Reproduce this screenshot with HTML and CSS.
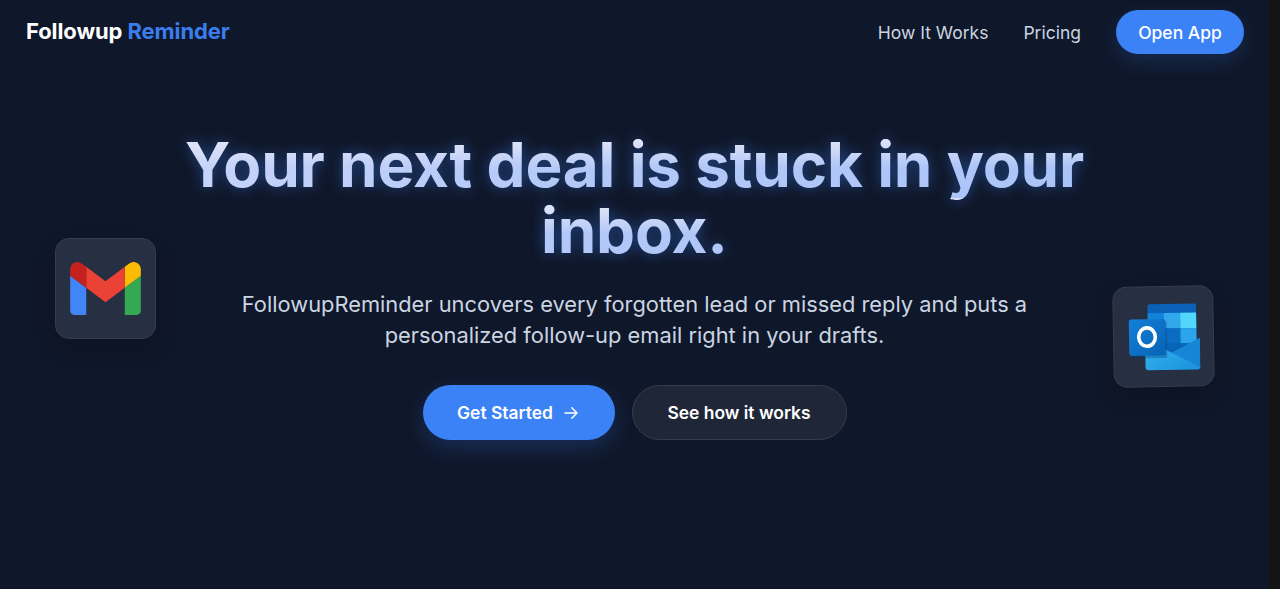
FILE: index.html
```html
<!DOCTYPE html>
<html lang="en">
<head>
    <meta charset="UTF-8">
    <meta name="viewport" content="width=device-width, initial-scale=1.0">
    <title>Followup Reminder</title>
    <link rel="stylesheet" href="styles.css">
</head>
<body>
    <div class="page">
        <header class="navbar">
            <a href="#" class="logo">Followup <span class="logo-accent">Reminder</span></a>
            <nav class="nav-links">
                <a href="#how">How It Works</a>
                <a href="#pricing">Pricing</a>
                <a href="#app" class="btn-app">Open App</a>
            </nav>
        </header>

        <main class="hero">
            <div class="tile tile-gmail">
                <svg width="71" height="53" viewBox="52 42 88 66" aria-label="Gmail">
                    <path fill="#4285f4" d="M58 108h14V74L52 59v43c0 3.32 2.69 6 6 6"/>
                    <path fill="#34a853" d="M120 108h14c3.32 0 6-2.69 6-6V59l-20 15"/>
                    <path fill="#fbbc04" d="M120 48v26l20-15v-8c0-7.42-8.47-11.65-14.4-7.2"/>
                    <path fill="#ea4335" d="M72 74V48l24 18 24-18v26L96 92"/>
                    <path fill="#c5221f" d="M52 51v8l20 15V48l-5.6-4.2c-5.94-4.45-14.4-.22-14.4 7.2"/>
                </svg>
            </div>

            <div class="hero-content">
                <h1>Your next deal is stuck in your<br>inbox.</h1>
                <p class="subtitle">FollowupReminder uncovers every forgotten lead or missed reply and puts a personalized follow-up email right in your drafts.</p>
                <div class="actions">
                    <a href="#start" class="btn btn-primary">Get Started
                        <svg width="18" height="18" viewBox="0 0 24 24" fill="none" stroke="currentColor" stroke-width="2" stroke-linecap="round" stroke-linejoin="round"><path d="M4 12h16M13 5l7 7-7 7"/></svg>
                    </a>
                    <a href="#how" class="btn btn-secondary">See how it works</a>
                </div>
            </div>

            <div class="tile tile-outlook">
                <svg width="72" height="68" viewBox="0 0 72 68" aria-label="Outlook">
                    <defs>
                        <linearGradient id="flap" x1="0" y1="0" x2="1" y2="1">
                            <stop offset="0" stop-color="#35b8f1"/>
                            <stop offset="1" stop-color="#1b8fdc"/>
                        </linearGradient>
                        <linearGradient id="badge" x1="0" y1="0" x2="1" y2="1">
                            <stop offset="0" stop-color="#1380d9"/>
                            <stop offset="1" stop-color="#0863b5"/>
                        </linearGradient>
                    </defs>
                    <!-- calendar -->
                    <path fill="#0a62b8" d="M22 1h45a1.500 1.500 0 0 1 1.500 1.500V46L44 56 20 44V3a2 2 0 0 1 2-2z"/>
                    <path fill="#1283d9" d="M20 10h16v17H20z"/>
                    <path fill="#30a8eb" d="M36 10h16.500v15.500H36z"/>
                    <path fill="#52d6fb" d="M52.500 10h16v15.500h-16z"/>
                    <path fill="#0b6cc4" d="M36 25.500h16.500V41H36z"/>
                    <path fill="#2aa5eb" d="M52.500 25.500h16V41h-16z"/>
                    <path fill="#0864b4" d="M36 40.500h32.500L46 51z"/>
                    <!-- envelope -->
                    <path fill="#1685d5" d="M72 35.500V66L43 50z"/>
                    <path fill="url(#flap)" d="M17 36l55 29a2.500 2.500 0 0 1-2.500 2H19.500a2.500 2.500 0 0 1-2.500-2.500z"/>
                    <!-- badge -->
                    <rect x="3" y="18" width="36" height="37" rx="2" fill="#063e75" opacity=".35"/>
                    <rect x="1" y="16" width="36.500" height="36.500" rx="2.500" fill="url(#badge)"/>
                    <ellipse cx="19" cy="33.800" rx="8.300" ry="9.200" fill="none" stroke="#fff" stroke-width="3.600"/>
                </svg>
            </div>
        </main>
    </div>
</body>
</html>
```
FILE: styles.css
```css
* {
    box-sizing: border-box;
}

body {
    margin: 0;
    background-color: #141414;
    font-family: Inter, sans-serif;
    color: #ffffff;
}

a {
    color: inherit;
    text-decoration: none;
}

svg {
    display: block;
}

.page {
    width: 1269px;
    height: 589px;
    background-color: #0f172a;
    overflow: hidden;
}

.navbar {
    display: flex;
    justify-content: space-between;
    align-items: center;
    height: 64px;
    padding: 0 25px 0 26px;
}

.logo {
    padding-bottom: 2px;
    font-size: 22px;
    font-weight: 700;
    letter-spacing: -0.1px;
}

.logo-accent {
    color: #3b7ded;
}

.nav-links {
    display: flex;
    align-items: center;
    gap: 35px;
    font-size: 17.5px;
    color: #cbd5e1;
}

.btn-app {
    display: flex;
    align-items: center;
    justify-content: center;
    width: 128px;
    height: 44px;
    border-radius: 22px;
    background-color: #3b82f6;
    color: #ffffff;
    font-weight: 500;
    box-shadow: 0 8px 20px rgba(59, 130, 246, 0.18);
}

.hero {
    display: grid;
    grid-template-columns: 101px 1fr 101px;
    align-items: start;
    padding: 0 55px;
}

.tile {
    display: flex;
    align-items: center;
    justify-content: center;
    width: 101px;
    height: 101px;
    border: 1px solid #343c4f;
    border-radius: 14px;
    background-color: #272f42;
    box-shadow: 0 10px 24px rgba(0, 0, 0, 0.18);
}

.tile-gmail {
    margin-top: 174px;
}

.tile-outlook {
    margin-top: 222px;
    transform: rotate(-1deg);
}

.hero-content {
    display: flex;
    flex-direction: column;
    align-items: center;
    padding-top: 68px;
    text-align: center;
}

h1 {
    margin: 0;
    font-size: 62px;
    font-weight: 700;
    line-height: 66px;
    letter-spacing: -0.2px;
    white-space: nowrap;
    color: transparent;
    background-image:
        linear-gradient(rgba(226, 229, 245, 0.9) 14%, rgba(226, 229, 245, 0) 55%),
        linear-gradient(135deg, #c9d5fa 0%, #b5c9f8 40%, #a9c3f8 100%);
    background-size: 100% 66px, 100% 100%;
    -webkit-background-clip: text;
    background-clip: text;
    filter: drop-shadow(0 0 7px rgba(59, 130, 246, 0.45));
}

.subtitle {
    width: 810px;
    margin: 25px 0 0;
    font-size: 21.85px;
    line-height: 31px;
    color: #cbd5e1;
}

.actions {
    display: flex;
    gap: 17px;
    margin-top: 34px;
}

.btn {
    display: flex;
    align-items: center;
    justify-content: center;
    height: 55px;
    border-radius: 28px;
    font-size: 17.45px;
    font-weight: 600;
}

.btn-primary {
    width: 192px;
    gap: 9px;
    background-color: #3b82f6;
    box-shadow: 0 8px 22px rgba(59, 130, 246, 0.22);
}

.btn-secondary {
    width: 215px;
    border: 1px solid #343c4d;
    background-color: #1e2638;
}
```
